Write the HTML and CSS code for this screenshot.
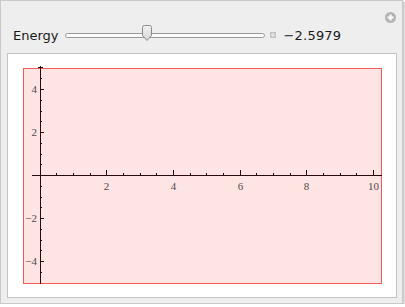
FILE: index.html
```html
<!DOCTYPE html>
<html>
<head>
<meta charset="utf-8">
<link rel="stylesheet" href="styles.css">
</head>
<body>
<div class="frame">
  <svg class="plus" width="11" height="11" viewBox="0 0 11 11">
    <circle cx="5.5" cy="5.5" r="5.5" fill="#b4b4b4"/>
    <rect x="2.5" y="4.5" width="6" height="2" fill="#fff"/>
    <rect x="4.5" y="2.5" width="2" height="6" fill="#fff"/>
  </svg>
  <div class="controls">
    <span class="label">Energy</span>
    <div class="slider">
      <div class="track"></div>
      <svg class="thumb" width="12" height="16" viewBox="0 0 12 16">
        <defs>
          <linearGradient id="tg" x1="0" y1="0" x2="0" y2="1">
            <stop offset="0" stop-color="#f4f4f4"/>
            <stop offset="1" stop-color="#d4d4d4"/>
          </linearGradient>
        </defs>
        <path d="M1.5 2.5 Q1.5 0.5 3.5 0.5 H8.5 Q10.5 0.5 10.5 2.5 V10.5 L6 15.5 L1.5 10.5 Z" fill="url(#tg)" stroke="#8a8a8a"/>
        <path d="M4 3.5 L4.5 4 M8 3.5 L7.5 4" stroke="#bbb"/>
      </svg>
    </div>
    <svg class="mini" width="6" height="6" viewBox="0 0 6 6">
      <rect x="0" y="0" width="6" height="6" fill="#c4c4c4"/>
      <rect x="1" y="2.5" width="4" height="1" fill="#eee"/>
      <rect x="2.5" y="1" width="1" height="4" fill="#eee"/>
    </svg>
    <span class="value">−2.5979</span>
  </div>
  <div class="panel">
    <svg class="plot" width="388" height="243" viewBox="0 0 388 243">
      <rect x="15.5" y="14.5" width="358" height="215" fill="#ffe4e4" stroke="#ee5a5a"/>
      <g stroke="#2a0a0a" stroke-width="1" fill="none">
        <line x1="32.5" y1="12" x2="32.5" y2="230"/>
        <line x1="24" y1="121.5" x2="374" y2="121.5"/>
        <line x1="30" y1="13.5" x2="35" y2="13.5"/>
        <path d="M32 35.5h4 M32 78.5h4 M32 164.5h4 M32 207.5h4"/>
        <path d="M32 24.5h2 M32 46.5h2 M32 57.5h2 M32 67.5h2 M32 89.5h2 M32 100.5h2 M32 110.5h2 M32 132.5h2 M32 143.5h2 M32 153.5h2 M32 175.5h2 M32 186.5h2 M32 196.5h2 M32 218.5h2"/>
        <path d="M98.5 121v-5 M165.5 121v-5 M232.5 121v-5 M298.5 121v-5 M365.5 121v-5"/>
        <path d="M48.5 121v-2 M65.5 121v-2 M82.5 121v-2 M115.5 121v-2 M132.5 121v-2 M148.5 121v-2 M182.5 121v-2 M198.5 121v-2 M215.5 121v-2 M248.5 121v-2 M265.5 121v-2 M282.5 121v-2 M315.5 121v-2 M332.5 121v-2 M348.5 121v-2"/>
      </g>
      <g class="ticklabel" text-anchor="end">
        <text x="29" y="39">4</text>
        <text x="29" y="82">2</text>
        <text x="29" y="168">−2</text>
        <text x="29" y="211">−4</text>
      </g>
      <g class="ticklabel" text-anchor="middle">
        <text x="98.5" y="136">2</text>
        <text x="165.5" y="136">4</text>
        <text x="232.5" y="136">6</text>
        <text x="298.5" y="136">8</text>
        <text x="365.5" y="136">10</text>
      </g>
    </svg>
  </div>
</div>
</body>
</html>
```

FILE: styles.css
```css
html, body {
  margin: 0;
  padding: 0;
  background: #ffffff;
}

.frame {
  position: relative;
  box-sizing: border-box;
  width: 403px;
  height: 304px;
  border: 1px solid #c9c9c9;
  background: #eeeeee;
  box-shadow: 1px 1px 0 #cfcfcf, 2px 2px 0 #dcdcdc;
  padding: 24px 0 0 6px;
  font-family: "DejaVu Sans", sans-serif;
}

.plus {
  position: absolute;
  top: 11px;
  right: 6px;
  display: block;
}

.controls {
  display: flex;
  align-items: center;
  height: 20px;
  padding-left: 6px;
  color: #1a1a1a;
  font-size: 13px;
}

.label {
  margin-right: 6px;
}

.slider {
  position: relative;
  width: 200px;
  height: 16px;
  display: flex;
  align-items: center;
}

.track {
  box-sizing: border-box;
  width: 200px;
  height: 5px;
  border: 1px solid #9a9a9a;
  border-radius: 3px;
  background: #fbfbfb;
}

.thumb {
  position: absolute;
  left: 76px;
  top: -2px;
  display: block;
}

.mini {
  display: block;
  margin-left: 5px;
  margin-right: 8px;
}

.value {
  letter-spacing: 0.2px;
}

.panel {
  box-sizing: border-box;
  width: 390px;
  height: 245px;
  margin-top: 8px;
  border: 1px solid #c4c4c4;
  background: #ffffff;
}

.plot {
  display: block;
}

.ticklabel {
  font-family: "Liberation Serif", serif;
  font-size: 11px;
  fill: #4a4a4a;
}
```
